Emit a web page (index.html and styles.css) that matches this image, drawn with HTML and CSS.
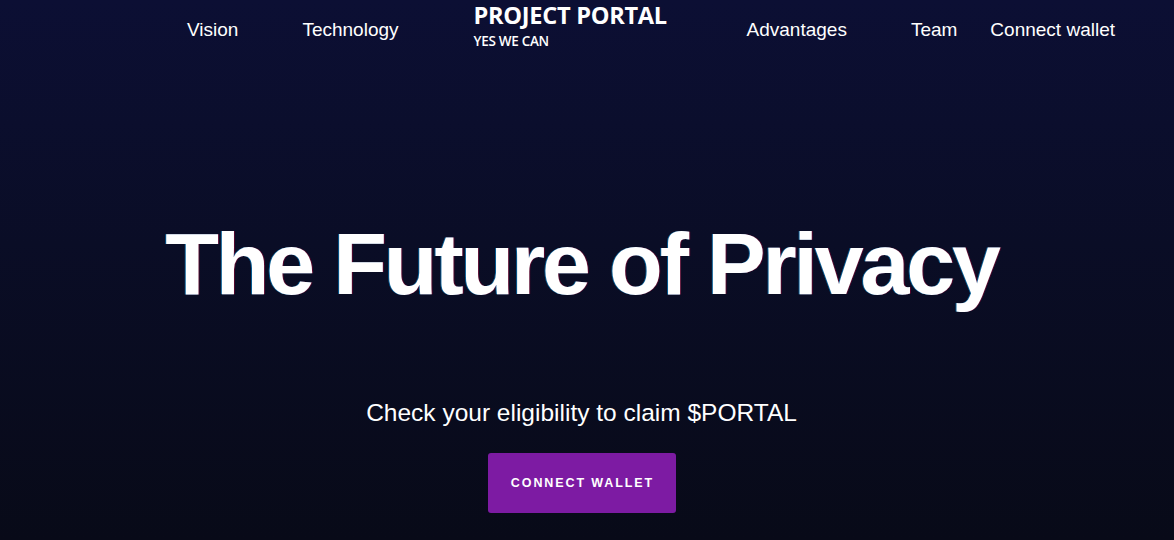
FILE: index.html
```html
<!DOCTYPE html>
<html lang="en">
<head>
<meta charset="utf-8">
<title>Project Portal</title>
<link rel="stylesheet" href="styles.css">
</head>
<body>
<div class="page">
  <header class="nav">
    <a class="nav-link vision" href="#">Vision</a>
    <a class="nav-link tech" href="#">Technology</a>
    <a class="logo" href="#">
      <span class="logo-title">PROJECT PORTAL</span>
      <span class="logo-sub">YES WE CAN</span>
    </a>
    <a class="nav-link adv" href="#">Advantages</a>
    <a class="nav-link team" href="#">Team</a>
    <a class="nav-link wallet" href="#">Connect wallet</a>
  </header>
  <main class="hero">
    <h1 class="hero-title">The Future of Privacy</h1>
    <p class="hero-sub">Check your eligibility to claim $PORTAL</p>
    <button class="cta">CONNECT WALLET</button>
  </main>
</div>
</body>
</html>
```
FILE: styles.css
```css
html, body {
  margin: 0;
  padding: 0;
}
body {
  width: 1174px;
  height: 540px;
  overflow: hidden;
  background: linear-gradient(180deg, #0c0f34 0%, #0a0d26 45%, #080a18 100%);
  color: #ffffff;
  font-family: "Liberation Sans", Arial, sans-serif;
}
.page {
  display: flex;
  flex-direction: column;
  height: 540px;
}
.nav {
  display: flex;
  align-items: flex-start;
  height: 60px;
  padding-left: 187px;
}
.nav-link {
  color: #ffffff;
  text-decoration: none;
  font-size: 19px;
  line-height: 22px;
  margin-top: 19px;
  white-space: nowrap;
  flex-shrink: 0;
}
.tech { margin-left: 64px; }
.logo {
  margin-left: 75px;
  display: flex;
  flex-direction: column;
  flex-shrink: 0;
  color: #ffffff;
  text-decoration: none;
  font-family: "Open Sans", sans-serif;
  width: 195px;
  margin-top: 1px;
  white-space: nowrap;
}
.logo-title {
  font-weight: 700;
  font-size: 23.6px;
  line-height: 28px;
  letter-spacing: -0.3px;
}
.logo-sub {
  margin-top: 4px;
  font-weight: 600;
  font-size: 13.5px;
  line-height: 16px;
  letter-spacing: -0.3px;
}
.adv { margin-left: 78px; }
.team { margin-left: 64px; }
.wallet { margin-left: 33px; }

.hero {
  display: flex;
  flex-direction: column;
  align-items: center;
  padding-right: 11px;
}
.hero-title {
  margin: 154px 0 0;
  font-size: 88px;
  line-height: 100px;
  font-weight: 700;
  letter-spacing: -3.2px;
  text-shadow: -1px 0 0 rgba(0, 170, 255, 0.5), 1px 0 0 rgba(200, 0, 60, 0.4);
}
.hero-sub {
  margin: 85px 0 0;
  font-size: 24.5px;
  line-height: 28px;
}
.cta {
  margin-top: 26px;
  width: 188px;
  height: 60px;
  border: none;
  border-radius: 3px;
  background: #7d1ba3;
  color: #ffffff;
  font-family: "Liberation Sans", Arial, sans-serif;
  font-weight: 700;
  font-size: 12.5px;
  letter-spacing: 1.9px;
  padding: 0 0 0 2px;
  cursor: pointer;
}
```
